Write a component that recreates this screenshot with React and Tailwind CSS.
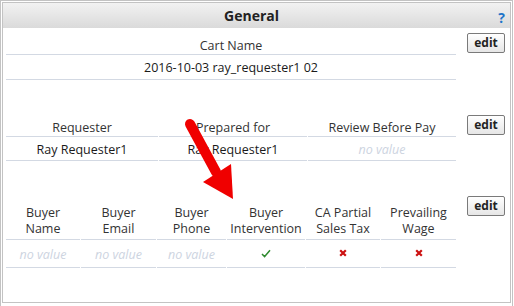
import React from "react";

const font = { fontFamily: '"Open Sans", "Noto Sans", sans-serif' };

function EditBtn() {
  return (
    <div className="ml-[11px] mt-[5px] w-[38px] h-[20px] border border-[#7a7a7a] rounded-[2px] bg-gradient-to-b from-[#ffffff] to-[#e6e6e6] flex items-center justify-center text-[12px] font-bold text-[#222] leading-none shrink-0">
      edit
    </div>
  );
}

function NoValue() {
  return <span className="italic text-[#cdd4df]">no value</span>;
}

function Section({ cols, headH, valH, headPb, valPt }) {
  return (
    <div className="flex mb-[30px]">
      <div className="flex gap-px w-[450px] shrink-0">
        {cols.map((c, i) => (
          <div key={i} className="flex flex-col" style={{ width: c.w }}>
            <div
              className="flex items-end justify-center text-center border-b border-[#d3d9e3] text-[#333] leading-4"
              style={{ height: headH, paddingBottom: headPb }}
            >
              <span>{c.h}</span>
            </div>
            <div
              className="flex items-center justify-center text-center border-b border-[#d3d9e3] text-[#1a1a1a]"
              style={{ height: valH, paddingTop: valPt }}
            >
              {c.v}
            </div>
          </div>
        ))}
      </div>
      <EditBtn />
    </div>
  );
}

const Check = () => (
  <svg width="10" height="9" viewBox="0 0 10 9" className="mb-[4px]">
    <path d="M1 5 L3.6 7.6 L9 1.2" fill="none" stroke="#2f8a2f" strokeWidth="1.5" />
  </svg>
);
const Cross = () => (
  <svg width="8" height="8" viewBox="0 0 8 8" className="mb-[4px]">
    <path d="M1.2 1.2 L6.8 6.8 M6.8 1.2 L1.2 6.8" fill="none" stroke="#cc1111" strokeWidth="2.2" />
  </svg>
);

export default function App() {
  return (
    <div className="w-[514px] h-[306px] bg-white overflow-hidden relative text-[12.5px]" style={font}>
      <div className="w-[513px] h-[306px] border-x border-t border-[#c3c3c3] pt-px px-px">
        <div className="h-[301px] border border-[#c3c3c3]">
          <div className="h-[25px] bg-gradient-to-b from-[#f2f2f2] to-[#dadada] flex items-center relative">
            <div className="flex-1 text-center font-bold text-[14px] text-[#222] pr-[10px]">General</div>
            <div className="absolute right-[5px] top-[4px] font-bold text-[14px] text-[#1f74c9]">?</div>
          </div>
          <div className="pl-[3px]">
            <Section
              headH={27}
              valH={25}
              headPb={0}
              valPt={2}
              cols={[{ w: 450, h: "Cart Name", v: "2016-10-03 ray_requester1 02" }]}
            />
            <Section
              headH={27}
              valH={24}
              headPb={0}
              valPt={3}
              cols={[
                { w: 152, h: "Requester", v: "Ray Requester1" },
                { w: 148, h: "Prepared for", v: "Ray Requester1" },
                { w: 148, h: "Review Before Pay", v: <NoValue /> },
              ]}
            />
            <Section
              headH={49}
              valH={28}
              headPb={2}
              valPt={3}
              cols={[
                { w: 74, h: <>Buyer<br />Name</>, v: <NoValue /> },
                { w: 75, h: <>Buyer<br />Email</>, v: <NoValue /> },
                { w: 69, h: <>Buyer<br />Phone</>, v: <NoValue /> },
                { w: 78, h: <>Buyer<br />Intervention</>, v: <Check /> },
                { w: 74, h: <>CA Partial<br />Sales Tax</>, v: <Cross /> },
                { w: 75, h: <>Prevailing<br />Wage</>, v: <Cross /> },
              ]}
            />
          </div>
        </div>
      </div>
      <svg className="absolute left-0 top-0 pointer-events-none" width="514" height="306">
        <line x1="190" y1="124" x2="216" y2="172" stroke="#f00000" strokeWidth="10" strokeLinecap="round" />
        <polygon points="203,182 231,164 233,199" fill="#f00000" />
      </svg>
    </div>
  );
}
